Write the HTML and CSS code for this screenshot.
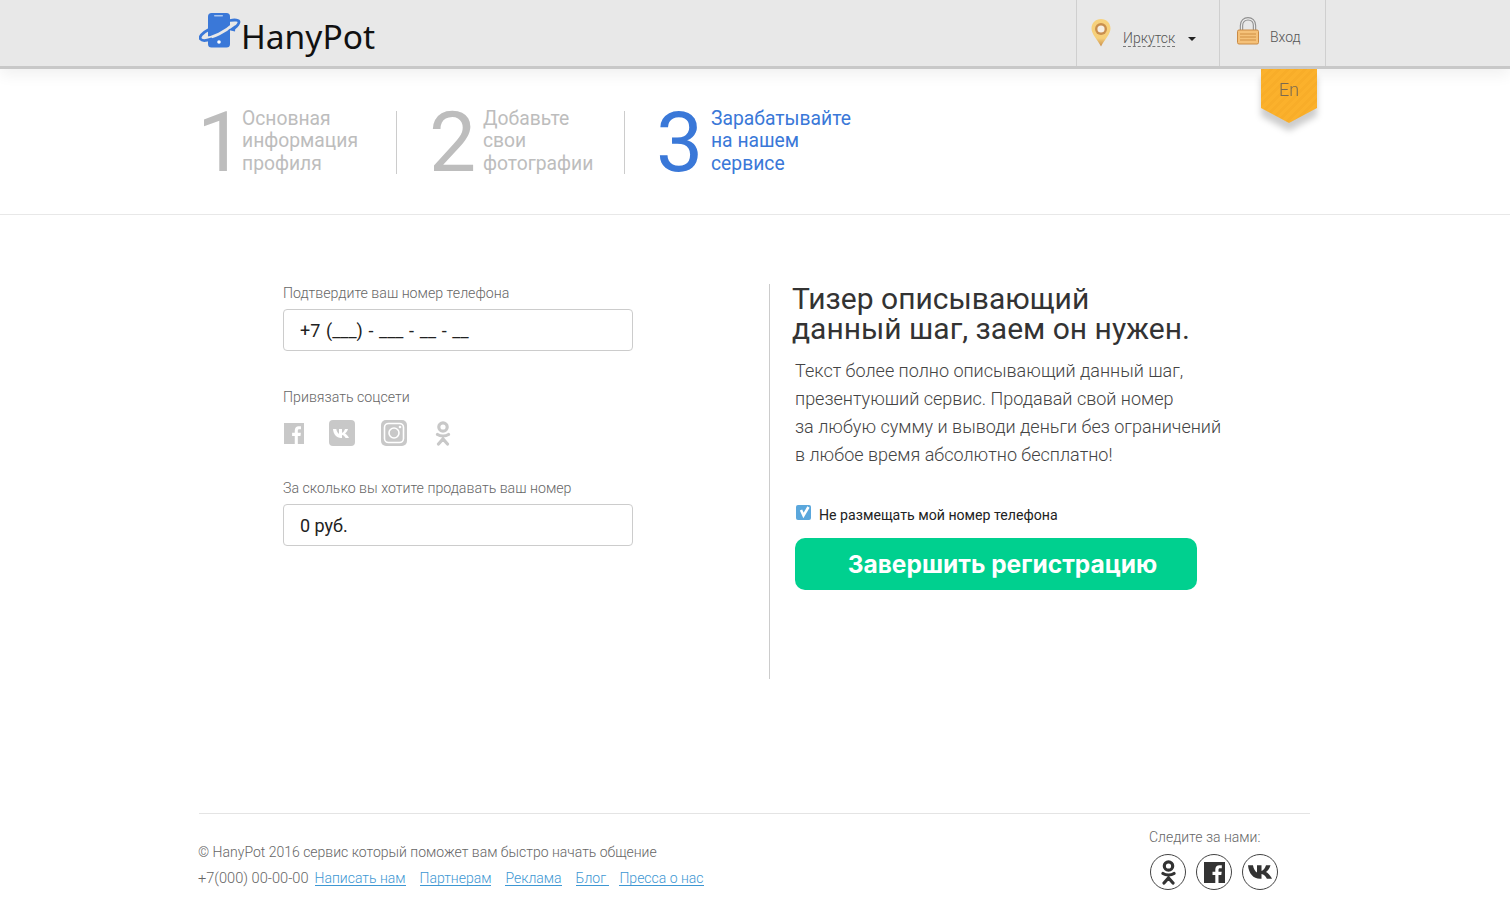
FILE: index.html

```html
<!DOCTYPE html>
<html lang="en">

<head>
    <meta charset="UTF-8">
    <meta name="viewport" content="width=device-width, initial-scale=1.0">
    <title>HanyPot</title>
    <link rel="stylesheet" href="styles.css">
</head>

<body>
    <header class="header">
        <div class="header-inner">
            <a class="logo">
                <svg class="logo-icon" width="42" height="38" viewBox="0 0 42 38">
                    <rect x="9" y="1" width="22" height="34.500" rx="3.500" fill="#3a78d8" />
                    <rect x="15" y="3" width="9" height="1.500" rx=".7" fill="#a9c6f0" />
                    <circle cx="20" cy="30" r="1.800" fill="#fff" />
                    <path d="M6 26.500 C14 25.500 26 20 34 12.500" fill="none" stroke="#e8e8e8" stroke-width="2.800" />
                    <path d="M9 18 C3 21 0 25 1.500 27 C3 29 8 28.500 12 27" fill="none" stroke="#3a78d8" stroke-width="2.800" stroke-linecap="round" />
                    <path d="M31 8.500 C36 7.500 40 8 40 10 C40 12 38 14 35 16.500" fill="none" stroke="#3a78d8" stroke-width="2.800" stroke-linecap="round" />
                    <path d="M29.500 18 L36.500 13 L36 19.500 Z" fill="#3a78d8" />
                </svg>
                <span class="logo-text">HanyPot</span>
            </a>
            <nav class="header-nav">
                <div class="nav-item nav-city">
                    <svg width="20" height="28" viewBox="0 0 20 28">
                        <defs>
                            <linearGradient id="pin" x1="0" y1="0" x2="0" y2="1">
                                <stop offset="0" stop-color="#f7d27e" />
                                <stop offset=".7" stop-color="#f6cf78" />
                                <stop offset="1" stop-color="#c98f4e" />
                            </linearGradient>
                        </defs>
                        <path d="M10 0 C15.500 0 19.500 4 19.500 9.500 C19.500 15 14 20 10 27.500 C6 20 .5 15 .5 9.500 C.5 4 4.500 0 10 0 Z" fill="url(#pin)" />
                        <circle cx="10" cy="10" r="6" fill="#c98f4e" />
                        <circle cx="10" cy="10" r="3.600" fill="#f6efe4" />
                    </svg>
                    <span class="city-name">Иркутск</span>
                    <span class="caret"></span>
                </div>
                <div class="nav-item nav-login">
                    <svg width="22" height="28" viewBox="0 0 22 28">
                        <path d="M4.500 14 V8.500 C4.500 4 7.500 1.800 11 1.800 C14.500 1.800 17.500 4 17.500 8.500 V14" fill="none" stroke="#8f8f8f" stroke-width="3.400" />
                        <path d="M4.500 14 V8.500 C4.500 4 7.500 1.800 11 1.800 C14.500 1.800 17.500 4 17.500 8.500 V14" fill="none" stroke="#ececec" stroke-width="1.200" />
                        <rect x=".5" y="13" width="21" height="14" rx="1.500" fill="#f5c179" stroke="#c98a45" stroke-width="1" />
                        <path d="M3 17 H19 M3 20 H19 M3 23 H19" stroke="#d08f45" stroke-width="1.100" />
                    </svg>
                    <span class="login-text">Вход</span>
                </div>
            </nav>
        </div>
    </header>

    <div class="lang-ribbon">
        <div class="lang-flag">En</div>
    </div>

    <section class="steps">
        <div class="step step-one">
            <div class="step-num">1</div>
            <div class="step-text">Основная<br>информация<br>профиля</div>
        </div>
        <div class="step step-two">
            <div class="step-num">2</div>
            <div class="step-text">Добавьте<br>свои<br>фотографии</div>
        </div>
        <div class="step step-three active">
            <div class="step-num">3</div>
            <div class="step-text">Зарабатывайте<br>на нашем<br>сервисе</div>
        </div>
    </section>

    <main class="main">
        <div class="form-col">
            <label class="field-label">Подтвердите ваш номер телефона</label>
            <input class="field-input phone-input" type="text" value="+7 (___) - ___ - __ - __">

            <div class="field-label social-label">Привязать соцсети</div>
            <div class="social-row">
                <svg class="soc-fb" width="20" height="21" viewBox="0 0 21 21" preserveAspectRatio="none">
                    <path d="M0 0 H21 V21 H14.500 V13 H17.300 L17.700 9.800 H14.500 V7.800 C14.500 6.800 14.800 6.200 16.100 6.200 H17.800 V3.300 C17.400 3.200 16.500 3.200 15.400 3.200 C13 3.200 11.300 4.700 11.300 7.400 V9.800 H8.500 V13 H11.300 V21 H0 Z" fill="#c8c8c8" />
                </svg>
                <svg class="soc-vk" width="26" height="26" viewBox="0 0 26 26">
                    <rect width="26" height="26" rx="4" fill="#c8c8c8" />
                    <path d="M4 9 H7.300 C7.700 11.300 8.800 13.300 10 13.800 V9 H13 V12.800 C14.300 12.600 15.400 10.900 16 9 H19 C18.500 11.200 17 12.800 16 13.500 C17 14 18.800 15.400 20 18 H16.600 C15.800 16.300 14.500 15.100 13 14.900 V18 H12 C7.500 18 4.500 14.500 4 9 Z" fill="#fff" />
                </svg>
                <svg class="soc-ig" width="26" height="26" viewBox="0 0 26 26">
                    <rect width="26" height="26" rx="5" fill="#c8c8c8" />
                    <rect x="3.500" y="3.500" width="19" height="19" rx="4" fill="none" stroke="#fff" stroke-width="1.600" />
                    <circle cx="13" cy="13" r="5" fill="none" stroke="#fff" stroke-width="1.600" />
                    <circle cx="19" cy="7" r="1.300" fill="#fff" />
                </svg>
                <svg class="soc-ok" width="16" height="25" viewBox="0 0 16 25">
                    <circle cx="8" cy="6" r="4.200" fill="none" stroke="#c8c8c8" stroke-width="3.200" />
                    <path d="M2.500 13.500 C5.500 15.500 10.500 15.500 13.500 13.500 M3.500 23 L8 18 L12.500 23" fill="none" stroke="#c8c8c8" stroke-width="3.200" stroke-linecap="round" />
                </svg>
            </div>

            <label class="field-label price-label">За сколько вы хотите продавать ваш номер</label>
            <input class="field-input" type="text" value="0 руб.">
        </div>

        <div class="info-col">
            <h1 class="info-title">Тизер описывающий<br>данный шаг, заем он нужен.</h1>
            <p class="info-text">Текст более полно описывающий данный шаг,<br>презентуюший сервис. Продавай свой номер<br>за любую сумму и выводи деньги без ограничений<br>в любое время абсолютно бесплатно!</p>
            <div class="check-row">
                <svg width="16" height="16" viewBox="0 0 16 16">
                    <rect x="0" y="1" width="15" height="15" rx="2" fill="#5aa7dc" />
                    <path d="M5 6 L7.500 11.500 L12.500 3" fill="none" stroke="#fff" stroke-width="2.600" />
                </svg>
                <span>Не размещать мой номер телефона</span>
            </div>
            <button class="finish-btn">Завершить регистрацию</button>
        </div>
    </main>

    <footer class="footer">
        <div class="footer-left">
            <div class="copy">© HanyPot 2016 сервис который поможет вам быстро начать общение</div>
            <div class="footer-links">
                <span class="phone">+7(000) 00-00-00</span>
                <a href="#">Написать нам</a>
                <a href="#">Партнерам</a>
                <a href="#">Реклама</a>
                <a href="#">Блог&nbsp;</a>
                <a class="press" href="#">Пресса о нас</a>
            </div>
        </div>
        <div class="footer-right">
            <div class="follow">Следите за нами:</div>
            <div class="follow-icons">
                <span class="round">
                    <svg width="17" height="25" viewBox="0 0 16 25">
                        <circle cx="8" cy="6" r="4.200" fill="none" stroke="#333" stroke-width="3.200" />
                        <path d="M2.500 13.500 C5.500 15.500 10.500 15.500 13.500 13.500 M3.500 23 L8 18 L12.500 23" fill="none" stroke="#333" stroke-width="3.200" stroke-linecap="round" />
                    </svg>
                </span>
                <span class="round">
                    <svg width="21" height="21" viewBox="0 0 21 21">
                        <path d="M0 0 H21 V21 H14.500 V13 H17.300 L17.700 9.800 H14.500 V7.800 C14.500 6.800 14.800 6.200 16.100 6.200 H17.800 V3.300 C17.400 3.200 16.500 3.200 15.400 3.200 C13 3.200 11.300 4.700 11.300 7.400 V9.800 H8.500 V13 H11.300 V21 H0 Z" fill="#333" />
                    </svg>
                </span>
                <span class="round">
                    <svg width="24" height="14" viewBox="4 9 16 9">
                        <path d="M4 9 H7.300 C7.700 11.300 8.800 13.300 10 13.800 V9 H13 V12.800 C14.300 12.600 15.400 10.900 16 9 H19 C18.500 11.200 17 12.800 16 13.500 C17 14 18.800 15.400 20 18 H16.600 C15.800 16.300 14.500 15.100 13 14.900 V18 H12 C7.500 18 4.500 14.500 4 9 Z" fill="#333" />
                    </svg>
                </span>
            </div>
        </div>
    </footer>
</body>

</html>
```

FILE: styles.css

```css
html,
body {
    margin: 0;
    padding: 0;
}

body {
    position: relative;
    height: 912px;
    overflow: hidden;
    font-family: Roboto, "Liberation Sans", sans-serif;
    font-weight: 300;
    color: #555;
    background-color: #fff;
}

.header {
    height: 66px;
    background-color: #e8e8e8;
    border-bottom: 3px solid #c8c8c8;
    box-shadow: 0 6px 14px rgba(0, 0, 0, 0.06);
}

.header-inner {
    display: flex;
    justify-content: space-between;
    width: 1127px;
    height: 66px;
    margin-left: 199px;
}

.logo {
    display: flex;
    align-items: flex-start;
}

.logo-icon {
    margin-top: 12px;
}

.logo-text {
    margin-top: 13px;
    font-family: "Noto Sans", sans-serif;
    font-weight: 400;
    font-size: 33.500px;
    line-height: 46px;
    color: #111;
}

.header-nav {
    display: flex;
}

.nav-item {
    display: flex;
    align-items: center;
    box-sizing: border-box;
    padding-top: 8px;
    border-left: 1px solid #cfcfcf;
}

.nav-city {
    width: 143px;
    padding-left: 14px;
}

.nav-city svg {
    margin-top: -9px;
}

.city-name {
    margin-left: 12px;
    margin-top: 2px;
    font-size: 14px;
    line-height: 16px;
    color: #555;
    border-bottom: 1px dashed #777;
}

.caret {
    margin-left: 13px;
    margin-top: 3px;
    border-top: 4px solid #222;
    border-left: 4px solid transparent;
    border-right: 4px solid transparent;
}

.nav-login {
    width: 107px;
    padding-left: 17px;
    border-right: 1px solid #cfcfcf;
}

.nav-login svg {
    margin-top: -12px;
}

.login-text {
    margin-left: 11px;
    font-size: 14px;
    color: #555;
}

.lang-ribbon {
    position: absolute;
    top: 69px;
    left: 1261px;
    filter: drop-shadow(0 8px 3px rgba(0, 0, 0, 0.2));
}

.lang-flag {
    width: 56px;
    height: 54px;
    text-align: center;
    font-size: 18px;
    line-height: 41px;
    color: #7a6a50;
    background: repeating-linear-gradient(-45deg, #fbb12c, #fbb12c 3px, #f8ad29 3px, #f8ad29 6px);
    clip-path: polygon(0 0, 100% 0, 100% 72%, 50% 100%, 0 72%);
}

.steps {
    display: flex;
    height: 145px;
    padding-left: 199px;
    border-bottom: 1px solid #e8e8e8;
}

.step {
    display: flex;
    align-items: flex-start;
    box-sizing: border-box;
    height: 63px;
    margin-top: 42px;
}

.step-one {
    width: 199px;
    margin-left: -2px;
}

.step-two {
    width: 228px;
    padding-left: 32px;
    border-left: 1px solid #ccc;
}

.step-three {
    padding-left: 31px;
    border-left: 1px solid #ccc;
}

.step-num {
    width: 54px;
    font-size: 84px;
    line-height: 63px;
    font-weight: 400;
    color: #bdbdbd;
}

.step-one .step-num {
    width: 45px;
}

.step-three .step-num {
    width: 55px;
}

.step-text {
    margin-top: -3.500px;
    font-size: 19.300px;
    line-height: 22.500px;
    font-weight: 400;
    color: #bdbdbd;
}

.active .step-num,
.active .step-text {
    color: #3a78d8;
}

.main {
    display: flex;
    height: 395px;
    margin-top: 69px;
    padding-left: 283px;
}

.form-col {
    width: 486px;
}

.field-label {
    display: block;
    font-size: 14.200px;
    line-height: 18px;
    color: #666;
}

.field-input {
    display: block;
    width: 350px;
    height: 42px;
    margin-top: 7px;
    padding: 0 16px;
    box-sizing: border-box;
    font-family: Roboto, sans-serif;
    font-size: 18px;
    font-weight: 400;
    color: #222;
    border: 1px solid #ccc;
    border-radius: 4px;
    background-color: #fff;
}

.phone-input {
    word-spacing: 1.200px;
}

.social-label {
    margin-top: 37px;
}

.social-row {
    display: flex;
    align-items: center;
    height: 26px;
    margin-top: 14px;
    margin-left: 1px;
}

.soc-vk {
    margin-left: 25px;
}

.soc-ig {
    margin-left: 26px;
}

.soc-ok {
    margin-left: 28px;
}

.price-label {
    margin-top: 33px;
}

.info-col {
    padding-left: 22px;
    border-left: 1px solid #ccc;
}

.info-title {
    margin: 0;
    font-family: Roboto, sans-serif;
    font-size: 30px;
    line-height: 30px;
    font-weight: 400;
    color: #333;
}

.info-text {
    margin: 13px 0 0 3px;
    font-size: 18px;
    line-height: 28px;
    color: #444;
}

.check-row {
    display: flex;
    align-items: center;
    margin: 38px 0 0 4px;
    font-size: 14.150px;
    font-weight: 400;
    color: #222;
}

.check-row svg {
    margin-right: 7px;
    margin-top: -6px;
}

.finish-btn {
    display: block;
    width: 402px;
    height: 52px;
    margin: 15px 0 0 3px;
    padding: 0 0 0 13px;
    font-family: Inter, sans-serif;
    font-size: 24.500px;
    font-weight: 700;
    color: #fff;
    background-color: #00d08f;
    border: none;
    border-radius: 10px;
}

.footer {
    display: flex;
    justify-content: space-between;
    width: 1111px;
    height: 98px;
    margin: 134px 0 0 199px;
    border-top: 1px solid #e4e4e4;
}

.footer-left {
    margin-top: 25px;
    margin-left: -1px;
    font-size: 14px;
    line-height: 26px;
    color: #666;
}

.footer-links {
    display: flex;
}

.phone {
    font-size: 14.600px;
}

.footer-links a {
    margin-left: 14px;
    line-height: 16px;
    height: 15px;
    margin-top: 5px;
    color: #3d97d3;
    text-decoration: none;
    border-bottom: 1px solid #3d97d3;
}

.footer-links .phone+a {
    margin-left: 6px;
}

.footer-links .press {
    margin-left: 10px;
}

.footer-right {
    width: 161px;
    margin-top: 14px;
}

.follow {
    font-size: 14px;
    line-height: 18px;
    color: #666;
}

.follow-icons {
    display: flex;
    gap: 10px;
    margin-top: 8px;
    margin-left: 1px;
}

.round {
    display: flex;
    align-items: center;
    justify-content: center;
    width: 36px;
    height: 36px;
    box-sizing: border-box;
    border: 1px solid #444;
    border-radius: 50%;
}
```
